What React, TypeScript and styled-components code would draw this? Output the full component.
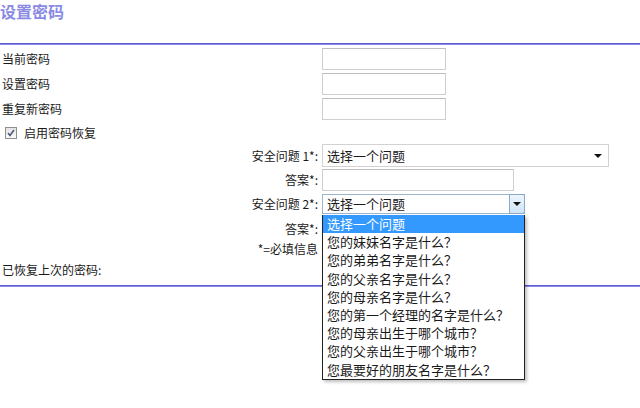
import React from "react";
import styled, { createGlobalStyle } from "styled-components";

const Global = createGlobalStyle`
  html, body { margin: 0; padding: 0; background: #fff; }
  body {
    font-family: "Noto Sans CJK SC", "Microsoft YaHei", "Liberation Sans", sans-serif;
    font-size: 12px;
    color: #1a1a1a;
  }
`;

const Page = styled.div`
  width: 640px;
  height: 408px;
  overflow: hidden;
  position: relative;
`;

const Title = styled.h1`
  margin: 0;
  height: 43px;
  font-size: 16px;
  line-height: 22px;
  font-weight: bold;
  color: #8a8ae4;
`;

const Divider = styled.div`
  height: 2px;
  background: linear-gradient(#5c5cd4 0 1px, #8a8ae6 1px 2px);
`;

const Row = styled.div<{ $h: number; $mt: number }>`
  display: grid;
  grid-template-columns: 322px 1fr;
  align-items: center;
  height: ${(p) => p.$h}px;
  margin-top: ${(p) => p.$mt}px;
  position: relative;
`;

const Label = styled.div<{ $right?: boolean }>`
  padding: ${(p) => (p.$right ? "0 4px 0 0" : "0 0 0 2px")};
  text-align: ${(p) => (p.$right ? "right" : "left")};
  white-space: nowrap;
  line-height: 16px;
`;

const TextInput = styled.div<{ $w: number }>`
  box-sizing: border-box;
  width: ${(p) => p.$w}px;
  height: 100%;
  border: 1px solid #cfcfcf;
  border-top-color: #bdbdbd;
  background: #fff;
`;

const CheckWrap = styled.label`
  grid-column: 1 / 3;
  display: flex;
  align-items: center;
  gap: 7px;
  padding-left: 5px;
  line-height: 16px;
`;

const Box = styled.span`
  box-sizing: border-box;
  width: 12px;
  height: 12px;
  border: 1px solid #8e8f8f;
  background: linear-gradient(#e4e4e4, #fafafa);
  display: flex;
  align-items: center;
  justify-content: center;
`;

const Select = styled.div<{ $w: number; $focus?: boolean }>`
  box-sizing: border-box;
  width: ${(p) => p.$w}px;
  height: 100%;
  border: 1px solid ${(p) => (p.$focus ? "#9db4cc" : "#d2d2d2")};
  background: #fff;
  display: flex;
  align-items: center;
  font-size: 13px;
  padding-left: 4px;
  position: relative;
`;

const SelectText = styled.span`
  flex: 1;
  line-height: 18px;
`;

const PlainArrow = styled.span`
  width: 0;
  height: 0;
  border-left: 4px solid transparent;
  border-right: 4px solid transparent;
  border-top: 4px solid #111;
  margin-right: 6px;
`;

const ArrowButton = styled.span`
  box-sizing: border-box;
  align-self: stretch;
  width: 16px;
  margin: -1px -1px -1px 0;
  border: 1px solid #8aa9c7;
  border-radius: 0 2px 2px 0;
  background: linear-gradient(#eef5fc, #cfe3f6);
  display: flex;
  align-items: center;
  justify-content: center;
  &::after {
    content: "";
    border-left: 4px solid transparent;
    border-right: 4px solid transparent;
    border-top: 4px solid #111;
  }
`;

const List = styled.ul`
  position: absolute;
  left: 0;
  top: calc(100% + 1px);
  width: 203px;
  box-sizing: border-box;
  margin: 0;
  padding: 0;
  list-style: none;
  background: #fff;
  border: 1px solid #222;
  border-top: none;
  box-shadow: 2px 2px 3px rgba(0, 0, 0, 0.25);
  z-index: 5;
`;

const Item = styled.li<{ $active?: boolean }>`
  height: 18.2px;
  line-height: 18px;
  font-size: 13px;
  padding-left: 4px;
  white-space: nowrap;
  background: ${(p) => (p.$active ? "#3399ff" : "#fff")};
  color: ${(p) => (p.$active ? "#fff" : "#1a1a1a")};
`;

const Field = styled.div`
  height: 100%;
  position: relative;
`;

const SectionLine = styled(Divider)`
  margin-top: 7px;
`;

const options = [
  "选择一个问题",
  "您的妹妹名字是什么？",
  "您的弟弟名字是什么？",
  "您的父亲名字是什么？",
  "您的母亲名字是什么？",
  "您的第一个经理的名字是什么？",
  "您的母亲出生于哪个城市？",
  "您的父亲出生于哪个城市？",
  "您最要好的朋友名字是什么？",
];

export default function App() {
  return (
    <Page>
      <Global />
      <Title>设置密码</Title>
      <Divider />
      <Row $h={22} $mt={3}>
        <Label>当前密码</Label>
        <TextInput $w={124} />
      </Row>
      <Row $h={22} $mt={3}>
        <Label>设置密码</Label>
        <TextInput $w={124} />
      </Row>
      <Row $h={22} $mt={3}>
        <Label>重复新密码</Label>
        <TextInput $w={124} />
      </Row>
      <Row $h={18} $mt={4}>
        <CheckWrap>
          <Box>
            <svg width="10" height="10" viewBox="0 0 10 10">
              <path d="M2 5 L4 7.5 L8 2" fill="none" stroke="#4a5a7a" strokeWidth="1.6" />
            </svg>
          </Box>
          启用密码恢复
        </CheckWrap>
      </Row>
      <Row $h={23} $mt={2}>
        <Label $right>安全问题 1*:</Label>
        <Select $w={287}>
          <SelectText>选择一个问题</SelectText>
          <PlainArrow />
        </Select>
      </Row>
      <Row $h={22} $mt={2}>
        <Label $right>答案*:</Label>
        <TextInput $w={192} />
      </Row>
      <Row $h={20} $mt={3}>
        <Label $right>安全问题 2*:</Label>
        <Field>
          <Select $w={203} $focus>
            <SelectText>选择一个问题</SelectText>
            <ArrowButton />
          </Select>
          <List>
            {options.map((o, i) => (
              <Item key={o} $active={i === 0}>
                {o}
              </Item>
            ))}
          </List>
        </Field>
      </Row>
      <Row $h={22} $mt={4}>
        <Label $right>答案*:</Label>
        <TextInput $w={192} />
      </Row>
      <Row $h={14} $mt={1}>
        <Label $right>*=必填信息</Label>
      </Row>
      <Row $h={16} $mt={7}>
        <Label>已恢复上次的密码:</Label>
      </Row>
      <SectionLine />
    </Page>
  );
}
